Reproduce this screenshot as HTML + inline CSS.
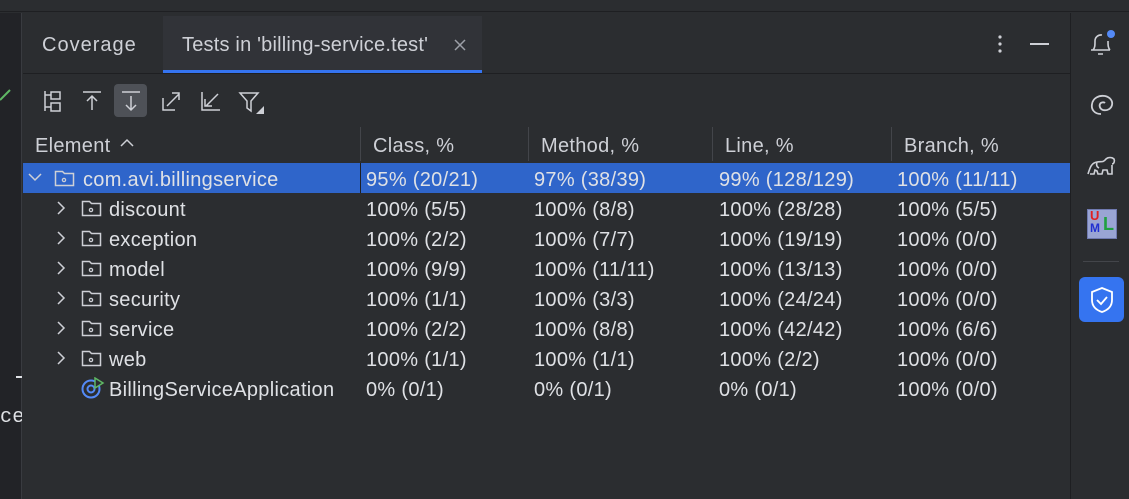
<!DOCTYPE html>
<html><head><meta charset="utf-8"><style>
*{margin:0;padding:0;box-sizing:border-box}
body{width:1129px;height:499px;background:#2b2d30;font-family:"Liberation Sans",sans-serif;color:#dfe1e5;position:relative;overflow:hidden;font-size:20px;letter-spacing:0.3px}
.a{position:absolute;white-space:nowrap}
.row{position:absolute;left:23px;width:1047px;height:30px}
.row span{position:absolute;top:6px;line-height:22px}
svg{position:absolute}
</style></head><body>
<div class="a" style="left:0;top:0;width:1129px;height:12px;background:#2b2d30;border-bottom:1px solid #1e1f22"></div>
<div class="a" style="left:0;top:13px;width:22px;height:486px;background:#222327;border-right:1px solid #393b40"></div>
<svg style="left:0;top:86px" width="14" height="18"><path d="M0 14 L10 4" stroke="#5fb865" stroke-width="2"/></svg>
<div class="a" style="left:16px;top:376px;width:6px;height:2px;background:#dfe1e5"></div>
<div class="a" style="left:0;top:406px;font-size:20px;font-family:'Liberation Mono',monospace;width:22px;overflow:hidden">ce</div>
<div class="a" style="left:1070px;top:13px;width:59px;height:486px;background:#2b2d30;border-left:1px solid #1e1f22"></div>
<div class="a" style="left:23px;top:73px;width:1047px;height:1px;background:#1e1f22"></div>
<div class="a" style="left:163px;top:16px;width:319px;height:57px;background:#313338"></div>
<div class="a" style="left:163px;top:70px;width:319px;height:3px;background:#3574f0"></div>
<div class="a" style="left:42px;top:34px;font-size:20px;letter-spacing:1px;color:#ced0d6">Coverage</div>
<div class="a" style="left:182px;top:34px;font-size:20px;letter-spacing:0.2px;color:#ced0d6">Tests in 'billing-service.test'</div>
<svg style="left:453px;top:38px" width="14" height="14"><path d="M2 2L12 12M12 2L2 12" stroke="#9da0a8" stroke-width="1.5"/></svg>
<svg style="left:995px;top:34px" width="10" height="20"><circle cx="5" cy="3" r="1.6" fill="#ced0d6"/><circle cx="5" cy="10" r="1.6" fill="#ced0d6"/><circle cx="5" cy="17" r="1.6" fill="#ced0d6"/></svg>
<div class="a" style="left:1030px;top:43px;width:19px;height:2px;background:#ced0d6"></div>
<div class="a" style="left:114px;top:84px;width:33px;height:33px;background:#4e5157;border-radius:4px"></div>
<svg style="left:40px;top:88px" width="240" height="28" fill="none" stroke="#ced0d6" stroke-width="1.5">
<path d="M5 3v20M5 7h6M5 19h6M11 4h9v7h-9zM11 15h9v8h-9z"/>
<path d="M43 4h18M52 22V9M47 13l5-5 5 5"/>
<path d="M82 4h18M91 8v14M86 17l5 5 5-5"/>
<path d="M123 10v12h12M127 18l12-12M132 5h7v7"/>
<path d="M162 4v18h18M178 6l-12 12M165 11v7h7"/>
<path d="M200 5h18l-7 8v10l-4-3v-7z"/>
</svg>
<svg style="left:256px;top:106px" width="8" height="8"><path d="M8 0V8H0z" fill="#ced0d6"/></svg>
<div class="a" style="left:35px;top:135px;color:#ced0d6">Element</div>
<svg style="left:120px;top:138px" width="14" height="10"><path d="M1 8l6-6 6 6" stroke="#ced0d6" stroke-width="1.5" fill="none"/></svg>
<div class="a" style="left:373px;top:135px;color:#ced0d6">Class, %</div>
<div class="a" style="left:541px;top:135px;color:#ced0d6">Method, %</div>
<div class="a" style="left:725px;top:135px;color:#ced0d6">Line, %</div>
<div class="a" style="left:904px;top:135px;color:#ced0d6">Branch, %</div>
<div class="a" style="left:360px;top:127px;width:1px;height:34px;background:#43454a"></div>
<div class="a" style="left:528px;top:127px;width:1px;height:34px;background:#43454a"></div>
<div class="a" style="left:712px;top:127px;width:1px;height:34px;background:#43454a"></div>
<div class="a" style="left:891px;top:127px;width:1px;height:34px;background:#43454a"></div>
<div class="row" style="top:163px;background:#2f65ca">
<div class="a" style="left:337px;top:0;width:1px;height:30px;background:#1e1f22"></div>
<svg style="left:5px;top:9px" width="14" height="10"><path d="M1 2l6 6 6-6" stroke="#ced0d6" stroke-width="1.5" fill="none"/></svg>
<svg style="left:31px;top:6px" width="22" height="18"><path d="M1.5 2.5h7l2 2h9v12h-18z" stroke="#ced0d6" stroke-width="1.5" fill="none"/><circle cx="10" cy="11" r="1.6" stroke="#ced0d6" stroke-width="1.3" fill="none"/></svg>
<span style="left:60px">com.avi.billingservice</span>
<span style="left:343px">95% (20/21)</span><span style="left:511px">97% (38/39)</span><span style="left:696px">99% (128/129)</span><span style="left:874px">100% (11/11)</span>
</div>
<div class="row" style="top:193px"><svg style="left:33px;top:8px" width="10" height="14"><path d="M2 1l6 6-6 6" stroke="#ced0d6" stroke-width="1.5" fill="none"/></svg><svg style="left:58px;top:6px" width="22" height="18"><path d="M1.5 2.5h7l2 2h9v12h-18z" stroke="#ced0d6" stroke-width="1.5" fill="none"/><circle cx="10" cy="11" r="1.6" stroke="#ced0d6" stroke-width="1.3" fill="none"/></svg><span style="left:86px">discount</span><span style="left:343px">100% (5/5)</span><span style="left:511px">100% (8/8)</span><span style="left:696px">100% (28/28)</span><span style="left:874px">100% (5/5)</span></div>
<div class="row" style="top:223px"><svg style="left:33px;top:8px" width="10" height="14"><path d="M2 1l6 6-6 6" stroke="#ced0d6" stroke-width="1.5" fill="none"/></svg><svg style="left:58px;top:6px" width="22" height="18"><path d="M1.5 2.5h7l2 2h9v12h-18z" stroke="#ced0d6" stroke-width="1.5" fill="none"/><circle cx="10" cy="11" r="1.6" stroke="#ced0d6" stroke-width="1.3" fill="none"/></svg><span style="left:86px">exception</span><span style="left:343px">100% (2/2)</span><span style="left:511px">100% (7/7)</span><span style="left:696px">100% (19/19)</span><span style="left:874px">100% (0/0)</span></div>
<div class="row" style="top:253px"><svg style="left:33px;top:8px" width="10" height="14"><path d="M2 1l6 6-6 6" stroke="#ced0d6" stroke-width="1.5" fill="none"/></svg><svg style="left:58px;top:6px" width="22" height="18"><path d="M1.5 2.5h7l2 2h9v12h-18z" stroke="#ced0d6" stroke-width="1.5" fill="none"/><circle cx="10" cy="11" r="1.6" stroke="#ced0d6" stroke-width="1.3" fill="none"/></svg><span style="left:86px">model</span><span style="left:343px">100% (9/9)</span><span style="left:511px">100% (11/11)</span><span style="left:696px">100% (13/13)</span><span style="left:874px">100% (0/0)</span></div>
<div class="row" style="top:283px"><svg style="left:33px;top:8px" width="10" height="14"><path d="M2 1l6 6-6 6" stroke="#ced0d6" stroke-width="1.5" fill="none"/></svg><svg style="left:58px;top:6px" width="22" height="18"><path d="M1.5 2.5h7l2 2h9v12h-18z" stroke="#ced0d6" stroke-width="1.5" fill="none"/><circle cx="10" cy="11" r="1.6" stroke="#ced0d6" stroke-width="1.3" fill="none"/></svg><span style="left:86px">security</span><span style="left:343px">100% (1/1)</span><span style="left:511px">100% (3/3)</span><span style="left:696px">100% (24/24)</span><span style="left:874px">100% (0/0)</span></div>
<div class="row" style="top:313px"><svg style="left:33px;top:8px" width="10" height="14"><path d="M2 1l6 6-6 6" stroke="#ced0d6" stroke-width="1.5" fill="none"/></svg><svg style="left:58px;top:6px" width="22" height="18"><path d="M1.5 2.5h7l2 2h9v12h-18z" stroke="#ced0d6" stroke-width="1.5" fill="none"/><circle cx="10" cy="11" r="1.6" stroke="#ced0d6" stroke-width="1.3" fill="none"/></svg><span style="left:86px">service</span><span style="left:343px">100% (2/2)</span><span style="left:511px">100% (8/8)</span><span style="left:696px">100% (42/42)</span><span style="left:874px">100% (6/6)</span></div>
<div class="row" style="top:343px"><svg style="left:33px;top:8px" width="10" height="14"><path d="M2 1l6 6-6 6" stroke="#ced0d6" stroke-width="1.5" fill="none"/></svg><svg style="left:58px;top:6px" width="22" height="18"><path d="M1.5 2.5h7l2 2h9v12h-18z" stroke="#ced0d6" stroke-width="1.5" fill="none"/><circle cx="10" cy="11" r="1.6" stroke="#ced0d6" stroke-width="1.3" fill="none"/></svg><span style="left:86px">web</span><span style="left:343px">100% (1/1)</span><span style="left:511px">100% (1/1)</span><span style="left:696px">100% (2/2)</span><span style="left:874px">100% (0/0)</span></div>
<div class="row" style="top:373px"><svg style="left:58px;top:4px" width="24" height="22"><circle cx="10" cy="12" r="8.5" stroke="#548af7" stroke-width="2" fill="none"/><circle cx="10" cy="12" r="3.5" stroke="#548af7" stroke-width="2" fill="none"/><path d="M14 1v10l8-5z" fill="#2b2d30" stroke="#5fb865" stroke-width="1.5"/></svg><span style="left:86px">BillingServiceApplication</span><span style="left:343px">0% (0/1)</span><span style="left:511px">0% (0/1)</span><span style="left:696px">0% (0/1)</span><span style="left:874px">100% (0/0)</span></div>
<svg style="left:1088px;top:28px" width="30" height="30" fill="none" stroke="#ced0d6" stroke-width="1.6"><path d="M3 22h19M5 22c2-2 2-5 2-9a6 6 0 0 1 7-6M20 13c0 4 0 7 2 9M10 26h5"/><circle cx="23" cy="6" r="4" fill="#548af7" stroke="none"/></svg>
<svg style="left:1088px;top:90px" width="28" height="28" fill="none" stroke="#ced0d6" stroke-width="1.8"><path d="M13 24C6 24 3 19 4 14 5 8 11 5 17 6c5 1 8 5 7 9-1 4-5 6-9 5-3-1-4-4-3-6 1-2 4-2 5-1"/></svg>
<svg style="left:1086px;top:150px" width="32" height="28" fill="none" stroke="#ced0d6" stroke-width="1.6"><path d="M2 24c2-6 3-11 9-12 4-1 6 1 9-3 2-2 6-2 8 0 1 2 0 5-2 5M11 12c-1 3 0 5 2 6M4 24h4l1-4 2 1 1 3h4l1-4h4l1 4h4v-9"/></svg>
<div class="a" style="left:1087px;top:209px;width:30px;height:30px;background:#9aa5d4;border:1px solid #707ab0"></div>
<div class="a" style="left:1090px;top:210px;font-size:13px;font-weight:bold;color:#e02020;line-height:12px">U</div>
<div class="a" style="left:1090px;top:222px;font-size:12px;font-weight:bold;color:#2030d0;line-height:12px">M</div>
<div class="a" style="left:1103px;top:214px;font-size:18px;font-weight:bold;color:#20a040;line-height:20px">L</div>
<div class="a" style="left:1083px;top:261px;width:36px;height:1px;background:#43454a"></div>
<div class="a" style="left:1079px;top:277px;width:45px;height:45px;background:#3574f0;border-radius:6px"></div>
<svg style="left:1088px;top:285px" width="28" height="30" fill="none" stroke="#fff" stroke-width="1.8"><path d="M14 3l10 4v8c0 6-4 10-10 12C8 25 4 21 4 15V7z"/><path d="M9 15l4 4 6-7"/></svg>
</body></html>
